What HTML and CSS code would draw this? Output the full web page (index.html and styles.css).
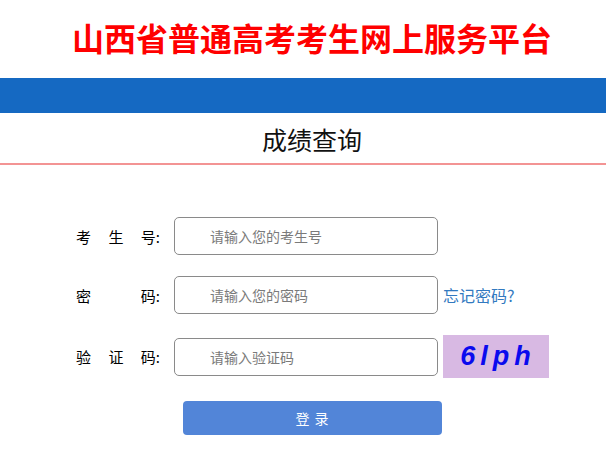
FILE: index.html
```html
<!DOCTYPE html>
<html lang="zh">
<head>
<meta charset="utf-8">
<title>山西省普通高考考生网上服务平台</title>
<link rel="stylesheet" href="styles.css">
</head>
<body>
<header class="top">
  <h1 class="site-title">山西省普通高考考生网上服务平台</h1>
</header>
<div class="bluebar"></div>
<div class="subhead">
  <h2 class="page-title">成绩查询</h2>
</div>
<main class="form">
  <div class="row">
    <label class="lbl"><span>考</span><span>生</span><span>号:</span></label>
    <input class="field" type="text" placeholder="请输入您的考生号">
  </div>
  <div class="row">
    <label class="lbl"><span>密</span><span>码:</span></label>
    <input class="field" type="password" placeholder="请输入您的密码">
    <a class="forgot" href="#">忘记密码?</a>
  </div>
  <div class="row">
    <label class="lbl"><span>验</span><span>证</span><span>码:</span></label>
    <input class="field" type="text" placeholder="请输入验证码">
    <div class="captcha">6lph</div>
  </div>
  <div class="actions">
    <button class="login" type="button">登 录</button>
  </div>
</main>
</body>
</html>
```
FILE: styles.css
```css
* { box-sizing: border-box; }
html, body { margin: 0; padding: 0; background: #fff; }
body {
  font-family: "Noto Sans CJK SC", "Noto Sans", "Liberation Sans", sans-serif;
  color: #000;
  width: 606px;
  overflow: hidden;
}
.top {
  height: 78px;
  padding: 21px 0 0 18px;
}
.site-title {
  margin: 0;
  text-align: center;
  color: #ff0000;
  font-size: 32px;
  font-weight: 700;
  line-height: 32px;
  letter-spacing: 0;
}
.bluebar {
  height: 35px;
  background: #1569c2;
}
.subhead {
  height: 52px;
  border-bottom: 2px solid #f39494;
  padding-left: 18px;
}
.page-title {
  margin: 0;
  text-align: center;
  font-size: 25px;
  font-weight: 400;
  line-height: 52px;
  color: #111;
}
.form {
  padding: 52px 0 0 76px;
  display: flex;
  flex-direction: column;
  gap: 21px;
}
.row {
  display: flex;
  align-items: center;
  height: 38px;
}
.row:nth-child(3) { height: 43px; }
.lbl {
  width: 84px;
  display: flex;
  justify-content: space-between;
  font-size: 15px;
  margin-right: 14px;
  color: #000;
}
.field {
  width: 264px;
  height: 38px;
  border: 1px solid #8a8a8a;
  border-radius: 5px;
  padding: 0 0 0 35px;
  font-family: inherit;
  font-size: 14px;
  color: #333;
  outline: none;
  background: #fff;
}
.field::placeholder { color: #7a7a7a; }
.forgot {
  margin-left: 5px;
  color: #3279c0;
  font-size: 16px;
  text-decoration: none;
}
.captcha {
  margin-left: 5px;
  width: 106px;
  height: 43px;
  background: #d8b9e3;
  color: #0a0aee;
  font-family: "Liberation Sans", Arial, sans-serif;
  font-weight: 700;
  font-style: italic;
  font-size: 27px;
  letter-spacing: 5px;
  text-align: center;
  line-height: 43px;
  padding-left: 4px;
}
.actions {
  padding-left: 107px;
  margin-top: 2px;
}
.login {
  width: 259px;
  height: 34px;
  border: none;
  border-radius: 4px;
  background: #5285d8;
  color: #fff;
  font-family: inherit;
  font-size: 14px;
  letter-spacing: 1px;
  cursor: pointer;
}
```
